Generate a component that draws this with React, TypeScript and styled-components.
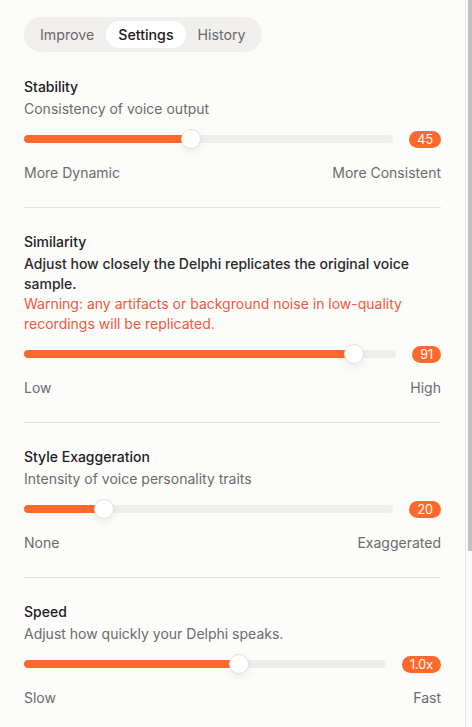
import styled, { createGlobalStyle } from "styled-components";
import { useState } from "react";

const GlobalStyle = createGlobalStyle`
    html, body {
        margin: 0;
        padding: 0;
        background: #fcfcfb;
        font-family: Inter, "Noto Sans", sans-serif;
        -webkit-font-smoothing: antialiased;
    }
    * {
        box-sizing: border-box;
    }
`

const Page = styled.div`
    display: flex;
    height: 100vh;
    overflow: hidden;
    background: #fcfcfb;
`

const Panel = styled.main`
    flex: 1;
    min-width: 0;
    overflow: hidden;
    border-right: 1px solid #e6e6e5;
`

// the panel's scroll bar, drawn since the headless browser hides real ones
const ScrollRail = styled.div`
    width: 6px;
    padding-left: 2px;
    background: #fafafa;
`

const ScrollThumb = styled.div`
    height: 551px;
    background: #c1c1c1;
`

const Content = styled.div`
    padding: 17px 24px 40px;
`

const TabBar = styled.nav`
    display: inline-flex;
    padding: 4px;
    border-radius: 18px;
    background: #f0efee;
    margin-bottom: 1px;
`

const Tab = styled.button<{ $active?: boolean }>`
    height: 27px;
    padding: 0 12px;
    border: none;
    border-radius: 14px;
    font-family: inherit;
    font-size: 14.2px;
    font-weight: ${({ $active }) => ($active ? 500 : 400)};
    color: ${({ $active }) => ($active ? "#1b1b1b" : "#6a6a6a")};
    background: ${({ $active }) => ($active ? "#ffffff" : "transparent")};
    cursor: pointer;
`

const Section = styled.section<{ $last?: boolean }>`
    padding: 24px 0;
    border-bottom: ${({ $last }) => ($last ? "none" : "1px solid #e4e3e1")};
`

const Title = styled.h3`
    margin: 0;
    font-size: 14px;
    line-height: 20px;
    font-weight: 500;
    color: #1d1d1d;
`

const Description = styled.p<{ $strong?: boolean }>`
    margin: 2px 0 0;
    font-size: 14px;
    line-height: 20px;
    font-weight: ${({ $strong }) => ($strong ? 500 : 400)};
    color: ${({ $strong }) => ($strong ? "#2a2a2a" : "#6b6b6b")};
`

const Warning = styled.p`
    margin: 0;
    font-size: 14px;
    line-height: 20px;
    color: #f2583b;
`

const SliderRow = styled.div`
    display: flex;
    align-items: center;
    gap: 16px;
    height: 20px;
    margin: 10px 0 14px;
`

const Track = styled.div`
    position: relative;
    flex: 1;
    height: 8px;
    border-radius: 4px;
    background: #efeeed;
`

const Fill = styled.div`
    position: absolute;
    left: 0;
    top: 0;
    bottom: 0;
    border-radius: 4px;
    background: #ff6a2c;
`

const Thumb = styled.div`
    position: absolute;
    top: 50%;
    width: 20px;
    height: 20px;
    margin: -10px 0 0 -10px;
    border-radius: 50%;
    background: #ffffff;
    border: 1px solid #e2e1df;
    box-shadow: 0 3px 8px rgba(0, 0, 0, 0.08);
`

const Badge = styled.span`
    flex-shrink: 0;
    height: 17px;
    padding: 0 8px;
    border-radius: 9px;
    background: #ff6a2c;
    color: #ffffff;
    font-size: 12.5px;
    line-height: 17px;
`

const Scale = styled.div`
    display: flex;
    justify-content: space-between;
    font-size: 14px;
    line-height: 20px;
    color: #6b6b6b;
`

type SliderProps = {
    pct: number;
    label: string;
};

const Slider = ({ pct, label }: SliderProps) => {
    const pos = `calc(10px + (100% - 20px) * ${pct})`;
    return (
        <SliderRow>
            <Track>
                <Fill style={{ width: pos }} />
                <Thumb style={{ left: pos }} />
            </Track>
            <Badge>{label}</Badge>
        </SliderRow>
    );
};

const tabs = ["Improve", "Settings", "History"];

const App = () => {
    const [tab, setTab] = useState("Settings");

    return <>
        <GlobalStyle />
        <Page>
            <Panel>
                <Content>
                    <TabBar>
                        {tabs.map((t) => (
                            <Tab key={t} $active={t === tab} onClick={() => setTab(t)}>{t}</Tab>
                        ))}
                    </TabBar>

                    <Section>
                        <Title>Stability</Title>
                        <Description>Consistency of voice output</Description>
                        <Slider pct={0.45} label="45" />
                        <Scale><span>More Dynamic</span><span>More Consistent</span></Scale>
                    </Section>

                    <Section>
                        <Title>Similarity</Title>
                        <Description $strong>Adjust how closely the Delphi replicates the original voice sample.</Description>
                        <Warning>Warning: any artifacts or background noise in low-quality recordings will be replicated.</Warning>
                        <Slider pct={0.91} label="91" />
                        <Scale><span>Low</span><span>High</span></Scale>
                    </Section>

                    <Section>
                        <Title>Style Exaggeration</Title>
                        <Description>Intensity of voice personality traits</Description>
                        <Slider pct={0.2} label="20" />
                        <Scale><span>None</span><span>Exaggerated</span></Scale>
                    </Section>

                    <Section $last>
                        <Title>Speed</Title>
                        <Description>Adjust how quickly your Delphi speaks.</Description>
                        <Slider pct={0.6} label="1.0x" />
                        <Scale><span>Slow</span><span>Fast</span></Scale>
                    </Section>
                </Content>
            </Panel>
            <ScrollRail>
                <ScrollThumb />
            </ScrollRail>
        </Page>
    </>
}

export default App;
